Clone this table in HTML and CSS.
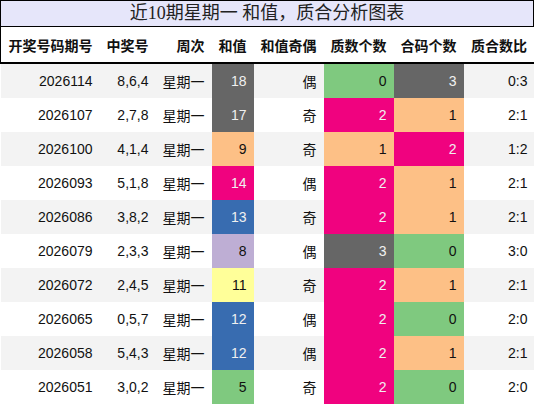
FILE: index.html
```html
<!DOCTYPE html>
<html lang="zh">
<head>
    <meta charset="UTF-8">
    <title>近10期星期一 和值，质合分析图表</title>
    <link rel="stylesheet" href="styles.css">
</head>
<body>

<div class="title">近10期星期一 和值，质合分析图表</div>

<table class="chart">
    <colgroup>
        <col style="width:99px">
        <col style="width:56px">
        <col style="width:56px">
        <col style="width:42px">
        <col style="width:70px">
        <col style="width:70px">
        <col style="width:70px">
        <col style="width:71px">
    </colgroup>
    <thead>
        <tr>
            <th>开奖号码期号</th>
            <th>中奖号</th>
            <th>周次</th>
            <th>和值</th>
            <th>和值奇偶</th>
            <th>质数个数</th>
            <th>合码个数</th>
            <th>质合数比</th>
        </tr>
    </thead>
    <tbody>
        <tr><td>2026114</td><td>8,6,4</td><td>星期一</td><td class="gray">18</td><td>偶</td><td class="green">0</td><td class="gray">3</td><td>0:3</td></tr>
        <tr><td>2026107</td><td>2,7,8</td><td>星期一</td><td class="gray">17</td><td>奇</td><td class="pink">2</td><td class="orange">1</td><td>2:1</td></tr>
        <tr><td>2026100</td><td>4,1,4</td><td>星期一</td><td class="orange">9</td><td>奇</td><td class="orange">1</td><td class="pink">2</td><td>1:2</td></tr>
        <tr><td>2026093</td><td>5,1,8</td><td>星期一</td><td class="pink">14</td><td>偶</td><td class="pink">2</td><td class="orange">1</td><td>2:1</td></tr>
        <tr><td>2026086</td><td>3,8,2</td><td>星期一</td><td class="blue">13</td><td>奇</td><td class="pink">2</td><td class="orange">1</td><td>2:1</td></tr>
        <tr><td>2026079</td><td>2,3,3</td><td>星期一</td><td class="purple">8</td><td>偶</td><td class="gray">3</td><td class="green">0</td><td>3:0</td></tr>
        <tr><td>2026072</td><td>2,4,5</td><td>星期一</td><td class="yellow">11</td><td>奇</td><td class="pink">2</td><td class="orange">1</td><td>2:1</td></tr>
        <tr><td>2026065</td><td>0,5,7</td><td>星期一</td><td class="blue">12</td><td>偶</td><td class="pink">2</td><td class="green">0</td><td>2:0</td></tr>
        <tr><td>2026058</td><td>5,4,3</td><td>星期一</td><td class="blue">12</td><td>偶</td><td class="pink">2</td><td class="orange">1</td><td>2:1</td></tr>
        <tr><td>2026051</td><td>3,0,2</td><td>星期一</td><td class="green">5</td><td>奇</td><td class="pink">2</td><td class="green">0</td><td>2:0</td></tr>
    </tbody>
</table>

</body>
</html>
```

FILE: styles.css
```css
body {
    margin: 0;
    padding: 0;
    background-color: white;
    font-family: "Liberation Sans", "Noto Sans CJK SC", sans-serif;
    color: #111;
    width: 534px;
}
.title {
    box-sizing: border-box;
    height: 27px;
    line-height: 25px;
    border: 1px solid #000;
    background-color: #e6e6fa;
    text-align: center;
    font-family: "Liberation Serif", "Noto Sans CJK SC", serif;
    font-size: 18px;
    color: #222;
}
.chart {
    width: 534px;
    border-collapse: collapse;
    table-layout: fixed;
    font-size: 14px;
}
.chart th {
    height: 35px;
    padding: 0 7px;
    text-align: right;
    font-weight: bold;
    border-bottom: 2px solid #000;
    white-space: nowrap;
}
.chart th:first-child {
    border-left: 1px solid #000;
}
.chart th:last-child {
    border-right: 1px solid #000;
}
.chart td {
    height: 34px;
    padding: 0 7px;
    text-align: right;
    white-space: nowrap;
}
.chart tbody tr:nth-child(odd) {
    background-color: #f3f3f3;
}
.chart tbody tr:nth-child(even) {
    background-color: #fff;
}
.chart td.gray {
    background-color: #666666;
    color: #f0f0f0;
}
.chart td.green {
    background-color: #7fc97f;
}
.chart td.pink {
    background-color: #f0027f;
    color: #f0f0f0;
}
.chart td.orange {
    background-color: #fdc086;
}
.chart td.blue {
    background-color: #386cb0;
    color: #f0f0f0;
}
.chart td.purple {
    background-color: #beaed4;
}
.chart td.yellow {
    background-color: #ffff99;
}
```
